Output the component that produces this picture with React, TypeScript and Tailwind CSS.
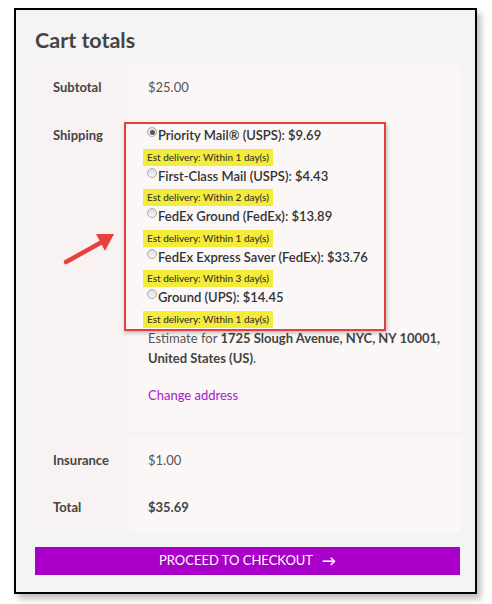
import React from "react";

type Option = { label: string; days: number; checked?: boolean };

const options: Option[] = [
  { label: "Priority Mail® (USPS): $9.69", days: 1, checked: true },
  { label: "First-Class Mail (USPS): $4.43", days: 2 },
  { label: "FedEx Ground (FedEx): $13.89", days: 1 },
  { label: "FedEx Express Saver (FedEx): $33.76", days: 3 },
  { label: "Ground (UPS): $14.45", days: 1 },
];

const Radio = ({ checked }: { checked?: boolean }) => (
  <span className="relative top-[-3px] mr-[1px] inline-flex h-[10px] w-[10px] shrink-0 items-center justify-center rounded-full border border-[#a9a9a9] bg-gradient-to-b from-[#dcdcdc] to-[#f7f7f7]">
    {checked && <span className="h-[5px] w-[5px] rounded-full bg-[#555]" />}
  </span>
);

const Row = ({
  label,
  children,
  className = "",
}: {
  label: string;
  children: React.ReactNode;
  className?: string;
}) => (
  <div className="flex">
    <div className={`w-[94px] shrink-0 bg-[#f8f2f2] pl-[18px] text-[13px] font-bold text-[#444] ${className}`}>
      {label}
    </div>
    <div className={`flex-1 bg-[#fbf7f7] pl-[19px] text-[13px] text-[#555] ${className}`}>
      {children}
    </div>
  </div>
);

export default function App() {
  return (
    <div
      className="relative h-[604px] w-[492px] bg-white pl-[14px] pt-[8px]"
      style={{ fontFamily: "Lato, 'Open Sans', sans-serif" }}
    >
      <div className="h-[586px] w-[463px] border-2 border-black bg-[#f4f4f4] px-[19px] pt-[15px] shadow-[4px_5px_6px_rgba(0,0,0,0.25)]">
        <h2 className="text-[21.5px] font-bold leading-[30px] text-[#444]">Cart totals</h2>

        <div className="mt-[10px] w-[425px]">
          <Row label="Subtotal" className="flex h-[45px] items-center">
            $25.00
          </Row>

          <div className="flex">
            <div className="w-[94px] shrink-0 bg-[#f8f2f2] pl-[18px] pt-[15px] text-[13px] font-bold leading-[20px] text-[#444]">
              Shipping
            </div>
            <div className="relative flex-1 bg-[#fbf7f7] pb-[27px] pl-[14px] pt-[15px] text-[#333]">
              <div className="pointer-events-none absolute left-[-5px] top-[12px] h-[209px] w-[262px] border-2 border-[#e4403f] shadow-[1px_2px_4px_rgba(0,0,0,0.25)]" />
              {options.map((o) => (
                <div key={o.label}>
                  <div className="flex items-center pl-[4px] text-[13px] font-semibold leading-[20.5px]">
                    <Radio checked={o.checked} />
                    <span>{o.label}</span>
                  </div>
                  <div className="mt-[3px] h-[17px] w-fit bg-[#f4ec3b] px-[4px] text-[10px] font-medium leading-[17px] text-[#333]">
                    Est delivery: Within {o.days} day(s)
                  </div>
                </div>
              ))}
              <div className="pl-[5px] text-[13px] leading-[20px] text-[#555]">
                <p>
                  Estimate for <strong className="font-bold text-[#444]">1725 Slough Avenue, NYC, NY 10001,</strong>
                </p>
                <p>
                  <strong className="font-bold text-[#444]">United States (US)</strong>.
                </p>
              </div>
              <a className="mt-[17px] block pl-[5px] text-[13px] leading-[20px] text-[#a521c4]">
                Change address
              </a>
            </div>
          </div>

          <div className="h-[5px] bg-[#f8f2f2]" />

          <Row label="Insurance" className="flex h-[48px] items-center">
            $1.00
          </Row>
          <Row label="Total" className="flex h-[47px] items-center">
            <span className="font-bold text-[#444]">$35.69</span>
          </Row>
        </div>

        <button className="mt-[15px] flex h-[28px] w-[425px] items-center justify-center gap-[9px] bg-[#a900c9] text-[13px] text-white">
          <span>PROCEED TO CHECKOUT</span>
          <span className="text-[14px] font-bold">→</span>
        </button>
      </div>

      <svg
        className="absolute left-[60px] top-[226px]"
        width="62"
        height="44"
        viewBox="0 0 62 44"
      >
        <line x1="6" y1="36" x2="42" y2="16" stroke="#e8403c" strokeWidth="4.5" strokeLinecap="round" />
        <polygon points="54,8 36,8 45,25" fill="#e8403c" />
      </svg>
    </div>
  );
}
